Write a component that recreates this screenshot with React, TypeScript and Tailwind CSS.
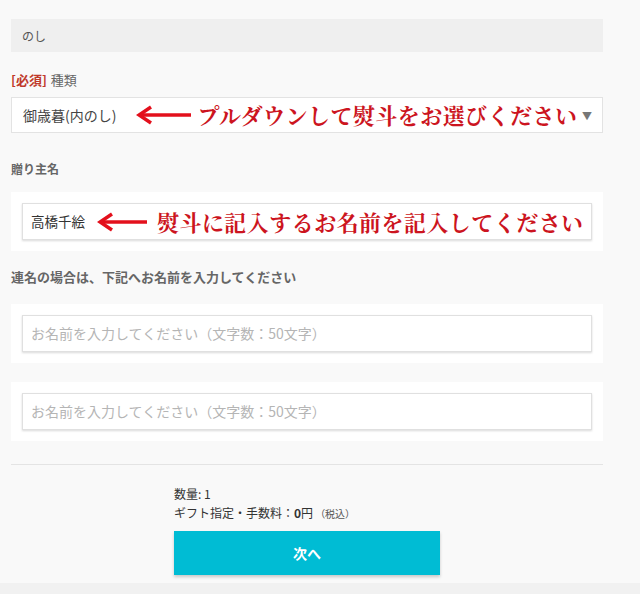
function Arrow({ w }: { w: number }) {
  return (
    <svg width={w} height="20" viewBox={`0 0 ${w} 20`} className="shrink-0">
      <line x1="4" y1="10" x2={w} y2="10" stroke="#e3101c" strokeWidth="3.5" />
      <path d="M15 2 L3 10 L15 18" fill="none" stroke="#e3101c" strokeWidth="3.5" strokeLinejoin="miter" />
    </svg>
  )
}

function NameInput() {
  return (
    <div className="bg-white px-[11px] py-[11px]">
      <div className="h-[37px] bg-white border border-[#e0e0e0] shadow-[0_1px_2px_rgba(0,0,0,0.15)] flex items-center pl-[8px] text-[14px] text-[#b5b5b5]">
        お名前を入力してください（文字数：50文字）
      </div>
    </div>
  )
}

export default function App() {
  const redText = "font-['Noto_Serif_CJK_JP','Noto_Sans_CJK_JP',serif] font-bold text-[22px] tracking-[0.45px] text-[#cc1420] leading-none"

  return (
    <div className="min-h-[594px] bg-[#f9f9f9] font-['Noto_Sans_CJK_JP','Liberation_Sans',sans-serif] flex flex-col">
      <div className="ml-[11px] w-[592px] pt-[19px] pb-[8px]">
        <div className="h-[33px] bg-[#efefef] flex items-center pl-[11px] text-[12px] text-[#555]">のし</div>

        <div className="mt-[19px] h-[18px] flex items-center text-[13px] text-[#666]">
          <span className="font-bold text-[#c0392b]">[必須]</span>
          <span className="ml-[4px]">種類</span>
        </div>

        <div className="mt-[8px] h-[36px] bg-white border border-[#e3e3e3] flex items-center pl-[11px] pr-[10px]">
          <span className="text-[14px] text-[#444]">御歳暮(内のし)</span>
          <span className="ml-[20px]"><Arrow w={55} /></span>
          <span className={`ml-[6px] ${redText}`}>プルダウンして熨斗をお選びください</span>
          <span className="ml-auto text-[10px] text-[#777]">▼</span>
        </div>

        <div className="mt-[27px] h-[18px] flex items-center text-[12px] font-bold text-[#666]">贈り主名</div>

        <div className="mt-[14px] bg-white px-[11px] py-[11px]">
          <div className="h-[37px] bg-white border border-[#e0e0e0] shadow-[0_1px_2px_rgba(0,0,0,0.15)] flex items-center pl-[8px]">
            <span className="text-[13.5px] text-[#333]">高橋千絵</span>
            <span className="ml-[12px]"><Arrow w={50} /></span>
            <span className={`ml-[10px] ${redText}`}>熨斗に記入するお名前を記入してください</span>
          </div>
        </div>

        <div className="mt-[17px] h-[18px] flex items-center text-[13px] font-bold text-[#666]">
          連名の場合は、下記へお名前を入力してください
        </div>

        <div className="mt-[18px]">
          <NameInput />
        </div>
        <div className="mt-[19px]">
          <NameInput />
        </div>

        <div className="mt-[23px] h-px bg-[#e4e4e4]" />

        <div className="mx-auto w-[266px] mt-[19px] text-[12px] text-[#333]">
          <div className="leading-[19px]">数量: 1</div>
          <div className="leading-[19px]">
            ギフト指定・手数料：<span className="font-bold">0</span>円<span className="text-[10px] text-[#555] ml-[2px]">（税込）</span>
          </div>
          <button className="mt-[8px] w-[266px] h-[44px] bg-[#00bcd4] text-white font-bold text-[14px] shadow-[0_2px_3px_rgba(0,0,0,0.2)]">
            次へ
          </button>
        </div>
      </div>
      <div className="flex-1 min-h-[10px] bg-[#f1f1f1]" />
    </div>
  )
}
